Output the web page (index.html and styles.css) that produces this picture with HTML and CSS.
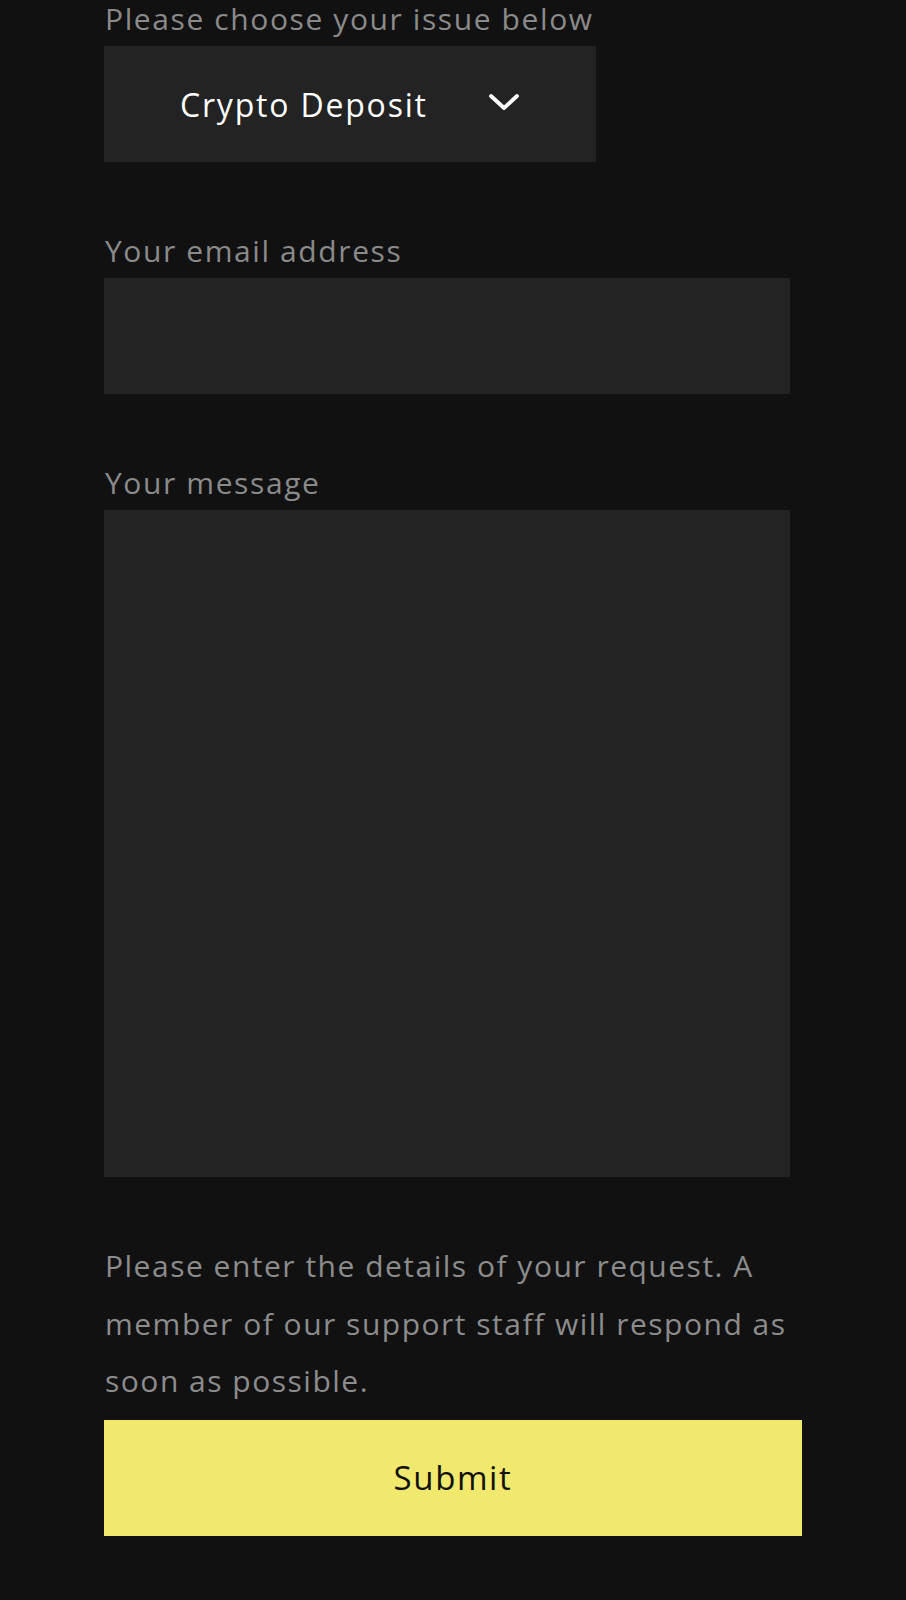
FILE: index.html
```html
<!DOCTYPE html>
<html lang="en">
<head>
<meta charset="utf-8">
<title>Support request</title>
<link rel="stylesheet" href="styles.css">
</head>
<body>
<form class="form">
  <div class="field">
    <label class="label">Please choose your issue below</label>
    <div class="select">
      <span class="select-value">Crypto Deposit</span>
      <svg class="chevron" width="32" height="18" viewBox="0 0 32 18" aria-hidden="true">
        <path d="M3 3 L16 15 L29 3" fill="none" stroke="#ffffff" stroke-width="3.8" stroke-linecap="round" stroke-linejoin="round"/>
      </svg>
    </div>
  </div>
  <div class="field">
    <label class="label">Your email address</label>
    <div class="input"></div>
  </div>
  <div class="field field-message">
    <label class="label">Your message</label>
    <div class="textarea"></div>
  </div>
  <p class="note">Please enter the details of your request. A member of our support staff will respond as soon as possible.</p>
  <button type="button" class="submit">Submit</button>
</form>
</body>
</html>
```
FILE: styles.css
```css
html, body {
  margin: 0;
  padding: 0;
  background: #111111;
}
body {
  font-family: "Open Sans", Roboto, "Liberation Sans", sans-serif;
  width: 906px;
  height: 1600px;
  overflow: hidden;
}
.form {
  display: flex;
  flex-direction: column;
  padding-left: 104px;
}
.field {
  display: flex;
  flex-direction: column;
  gap: 7px;
  margin-bottom: 70px;
}
.field-message {
  margin-bottom: 60px;
}
.label {
  display: block;
  height: 39px;
  line-height: 37px;
  font-size: 30px;
  letter-spacing: 1.6px;
  color: #8a8a8a;
  padding-left: 1px;
  white-space: nowrap;
}
.select {
  width: 492px;
  height: 116px;
  box-sizing: border-box;
  padding: 0 76px;
  background: #232323;
  display: flex;
  align-items: center;
  justify-content: space-between;
}
.select-value {
  font-size: 32px;
  letter-spacing: 1.8px;
  color: #ffffff;
  white-space: nowrap;
}
.chevron {
  display: block;
  margin-top: -4px;
}
.input {
  width: 686px;
  height: 116px;
  background: #232323;
}
.textarea {
  width: 686px;
  height: 667px;
  background: #232323;
}
.note {
  margin: 0;
  width: 690px;
  font-size: 30px;
  letter-spacing: 1.5px;
  line-height: 57.5px;
  color: #8c8c8c;
  padding-left: 1px;
}
.submit {
  margin-top: 10px;
  width: 698px;
  height: 116px;
  border: 0;
  background: #f0e96e;
  color: #111111;
  font-family: "Open Sans", Roboto, "Liberation Sans", sans-serif;
  font-size: 33px;
  letter-spacing: 1.6px;
  padding: 0;
  cursor: pointer;
}
```
